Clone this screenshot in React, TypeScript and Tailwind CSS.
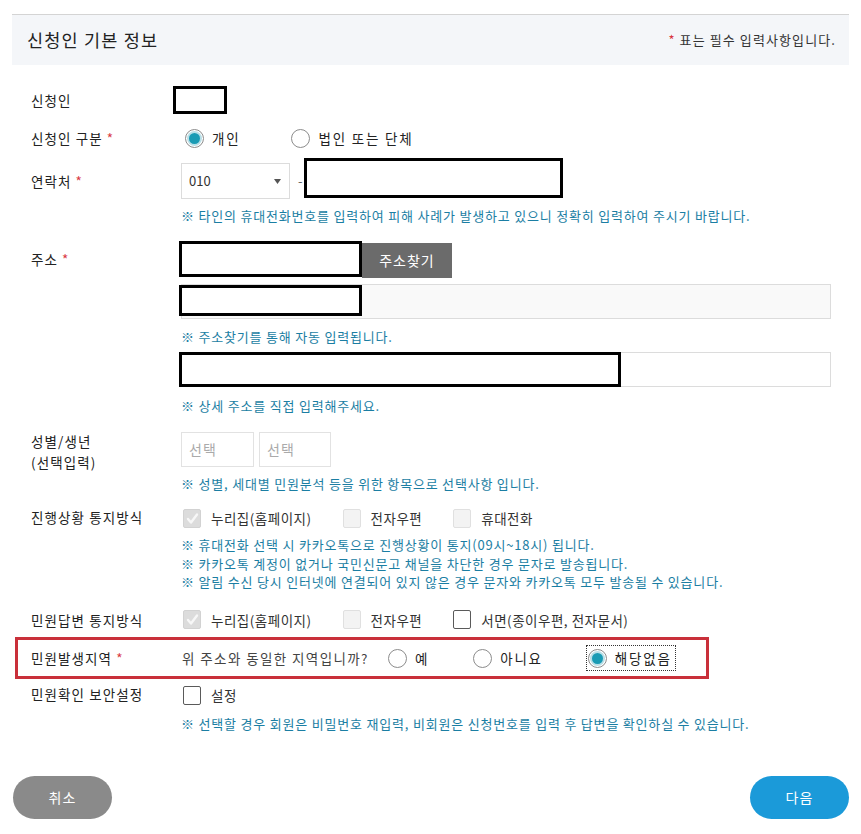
import React from 'react';

const FONT = { fontFamily: '"Noto Sans CJK KR", "Noto Sans", sans-serif' };

function Req() {
  return <span className="ml-[4px] text-[#d9363e]">*</span>;
}

function Radio({ checked, label }: { checked?: boolean; label: string }) {
  return (
    <label className="flex items-center">
      <span className="flex h-[19px] w-[19px] items-center justify-center rounded-full border border-[#8c8c8c] bg-white">
        {checked && <span className="h-[11px] w-[11px] rounded-full bg-[#1a9bb4] ring-2 ring-[#b9dfe7]" />}
      </span>
      <span className="ml-[8px] text-[13.5px] tracking-[1.8px] text-[#222]">{label}</span>
    </label>
  );
}

function Check({ state, label }: { state: 'checked' | 'disabled' | 'empty'; label: string }) {
  const box =
    state === 'checked'
      ? 'bg-[#dcdcdc] border-[#d2d2d2]'
      : state === 'disabled'
        ? 'bg-[#f3f3f3] border-[#e0e0e0]'
        : 'bg-white border-[#5a5a5a]';
  return (
    <label className="flex items-center">
      <span className={`flex h-[19px] w-[18px] items-center justify-center rounded-[2px] border ${box}`}>
        {state === 'checked' && (
          <svg width="13" height="13" viewBox="0 0 13 13">
            <path d="M2 7 L5 10.5 L11 2.5" fill="none" stroke="#f7f7f7" strokeWidth="2.4" strokeLinecap="round" strokeLinejoin="round" />
          </svg>
        )}
      </span>
      <span className="ml-[10px] text-[13.5px] tracking-[0.5px] text-[#333]">{label}</span>
    </label>
  );
}

function Note({ children }: { children: React.ReactNode }) {
  return <p className="text-[13px] leading-[18.5px] tracking-[0.8px] text-[#1b7ea3]">※ {children}</p>;
}

function Redact({ className }: { className: string }) {
  return <div className={`border-[3px] border-black bg-white ${className}`} />;
}

const LABEL = 'w-[150px] text-[13.5px] tracking-[1.1px]';

export default function App() {
  return (
    <div className="min-h-[834px] bg-white pb-[15px] text-[#222]" style={FONT}>
      <div className="mx-[12px] pt-[14px]">
        {/* Header */}
        <div className="flex h-[51px] items-center justify-between border-t border-[#d4d4d4] bg-[#f4f6f9] pl-[15px] pr-[13px]">
          <h2 className="text-[17.5px] tracking-[1.2px] text-[#222]">신청인 기본 정보</h2>
          <p className="text-[13px] tracking-[1.1px] text-[#333]">
            <span className="text-[#d9363e]">*</span> 표는 필수 입력사항입니다.
          </p>
        </div>

        {/* 신청인 */}
        <div className="mt-[21px] flex items-center pl-[19px]">
          <div className={LABEL}>신청인</div>
          <Redact className="-ml-[8px] h-[28px] w-[54px]" />
        </div>

        {/* 신청인 구분 */}
        <div className="mt-[12px] flex h-[24px] items-center pl-[19px]">
          <div className={LABEL}>
            신청인 구분<Req />
          </div>
          <div className="ml-[4px] flex items-center gap-[51px]">
            <Radio checked label="개인" />
            <Radio label="법인 또는 단체" />
          </div>
        </div>

        {/* 연락처 */}
        <div className="mt-[8px] flex pl-[19px]">
          <div className={`flex h-[41px] items-center pt-[5px] ${LABEL}`}>
            연락처<Req />
          </div>
          <div className="flex flex-col">
            <div className="flex items-start">
              <div className="mt-[5px] flex h-[36px] w-[109px] items-center justify-between border border-[#dcdcdc] pl-[7px] pr-[8px] text-[13px] text-[#333]">
                <span>010</span>
                <svg width="7" height="5" viewBox="0 0 7 5">
                  <path d="M0 0 H7 L3.5 5 Z" fill="#555" />
                </svg>
              </div>
              <span className="ml-[8px] mt-[13px] text-[13px] text-[#666]">-</span>
              <Redact className="ml-[1px] h-[40px] w-[259px]" />
            </div>
            <div className="mt-[8px]">
              <Note>타인의 휴대전화번호를 입력하여 피해 사례가 발생하고 있으니 정확히 입력하여 주시기 바랍니다.</Note>
            </div>
          </div>
        </div>

        {/* 주소 */}
        <div className="mt-[15px] flex pl-[19px]">
          <div className={`flex h-[37px] items-center ${LABEL}`}>
            주소<Req />
          </div>
          <div className="flex flex-1 flex-col pr-[18px]">
            <div className="flex items-start">
              <Redact className="-ml-[2px] h-[36px] w-[183px]" />
              <button className="mt-[2px] h-[35px] w-[90px] bg-[#6b6b6b] text-[14px] tracking-[1px] text-white">주소찾기</button>
            </div>
            <div className="relative mt-[6px] h-[35px] border border-[#dcdcdc] bg-[#f9f9f9]">
              <Redact className="absolute -left-[3px] top-0 h-[31px] w-[183px]" />
            </div>
            <div className="mt-[9px]">
              <Note>주소찾기를 통해 자동 입력됩니다.</Note>
            </div>
            <div className="relative mt-[6px] h-[35px] border border-[#dcdcdc] bg-white">
              <Redact className="absolute -left-[3px] -top-px h-[35px] w-[442px]" />
            </div>
            <div className="mt-[10px]">
              <Note>상세 주소를 직접 입력해주세요.</Note>
            </div>
          </div>
        </div>

        {/* 성별/생년 */}
        <div className="mt-[15px] flex pl-[19px]">
          <div className={`leading-[21px] ${LABEL}`}>
            성별/생년
            <br />
            (선택입력)
          </div>
          <div className="flex flex-col">
            <div className="mt-[1px] flex gap-[5px]">
              <div className="flex h-[35px] w-[73px] items-center border border-[#e2e2e2] pl-[7px] text-[14px] tracking-[1px] text-[#aaa]">선택</div>
              <div className="flex h-[35px] w-[72px] items-center border border-[#e2e2e2] pl-[7px] text-[14px] tracking-[1px] text-[#aaa]">선택</div>
            </div>
            <div className="mt-[8px]">
              <Note>성별, 세대별 민원분석 등을 위한 항목으로 선택사항 입니다.</Note>
            </div>
          </div>
        </div>

        {/* 진행상황 통지방식 */}
        <div className="mt-[15px] flex pl-[19px]">
          <div className={`flex h-[19px] items-center ${LABEL}`}>진행상황 통지방식</div>
          <div className="flex flex-col">
            <div className="ml-[2px] flex items-center gap-[31px]">
              <Check state="checked" label="누리집(홈페이지)" />
              <Check state="disabled" label="전자우편" />
              <Check state="disabled" label="휴대전화" />
            </div>
            <div className="mt-[8px]">
              <Note>휴대전화 선택 시 카카오톡으로 진행상황이 통지(09시~18시) 됩니다.</Note>
              <Note>카카오톡 계정이 없거나 국민신문고 채널을 차단한 경우 문자로 발송됩니다.</Note>
              <Note>알림 수신 당시 인터넷에 연결되어 있지 않은 경우 문자와 카카오톡 모두 발송될 수 있습니다.</Note>
            </div>
          </div>
        </div>

        {/* 민원답변 통지방식 */}
        <div className="mt-[18px] flex items-center pl-[19px]">
          <div className={LABEL}>민원답변 통지방식</div>
          <div className="ml-[2px] flex items-center gap-[31px]">
            <Check state="checked" label="누리집(홈페이지)" />
            <Check state="disabled" label="전자우편" />
            <Check state="empty" label="서면(종이우편, 전자문서)" />
          </div>
        </div>

        {/* 민원발생지역 */}
        <div className="ml-[3px] mt-[7px] flex h-[42px] w-[694px] items-center border-[3px] border-[#c9303a] pl-[13px]">
          <div className={LABEL}>
            민원발생지역<Req />
          </div>
          <span className="ml-[1px] text-[13.5px] tracking-[1.4px] text-[#444]">위 주소와 동일한 지역입니까?</span>
          <div className="ml-[19px]">
            <Radio label="예" />
          </div>
          <div className="ml-[44px]">
            <Radio label="아니요" />
          </div>
          <div className="ml-[43px] border border-dotted border-[#333] py-[2px] pl-[1px] pr-[3px]">
            <Radio checked label="해당없음" />
          </div>
        </div>

        {/* 민원확인 보안설정 */}
        <div className="mt-[6px] flex pl-[19px]">
          <div className={`flex h-[19px] items-center ${LABEL}`}>민원확인 보안설정</div>
          <div className="flex flex-col">
            <div className="ml-[2px] flex items-center">
              <Check state="empty" label="설정" />
            </div>
            <div className="mt-[10px]">
              <Note>선택할 경우 회원은 비밀번호 재입력, 비회원은 신청번호를 입력 후 답변을 확인하실 수 있습니다.</Note>
            </div>
          </div>
        </div>

        {/* Buttons */}
        <div className="mt-[42px] flex justify-between">
          <button className="ml-[1px] h-[43px] w-[99px] rounded-full bg-[#8a8a8a] text-[14px] tracking-[1px] text-white">취소</button>
          <button className="h-[43px] w-[99px] rounded-full bg-[#1b9ad9] text-[14px] tracking-[1px] text-white">다음</button>
        </div>
      </div>
    </div>
  );
}
